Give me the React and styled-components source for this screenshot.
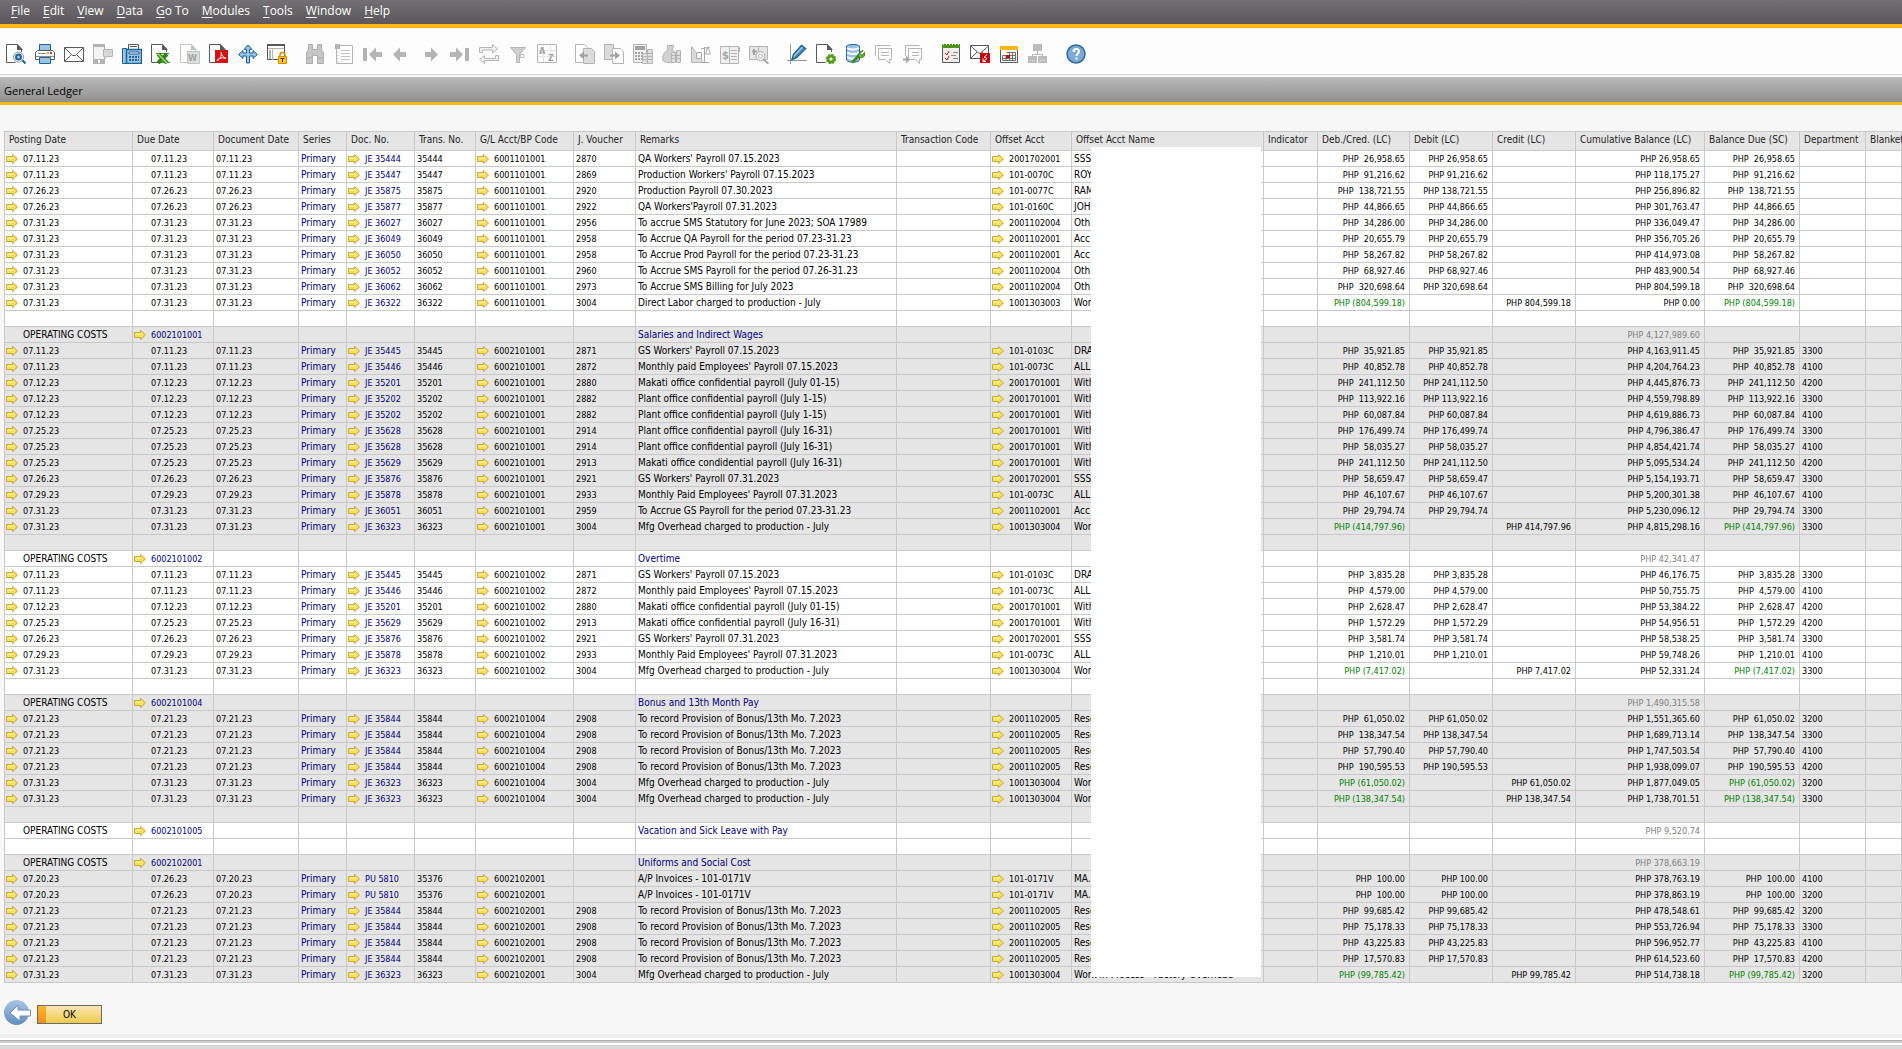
import React from "react";
import styled, { createGlobalStyle } from "styled-components";

const menus = [
  "File",
  "Edit",
  "View",
  "Data",
  "Go To",
  "Modules",
  "Tools",
  "Window",
  "Help",
];

const columns = [
  { title: "Posting Date", width: 128 },
  { title: "Due Date", width: 81 },
  { title: "Document Date", width: 85 },
  { title: "Series", width: 48 },
  { title: "Doc. No.", width: 68 },
  { title: "Trans. No.", width: 61 },
  { title: "G/L Acct/BP Code", width: 98 },
  { title: "J. Voucher", width: 62 },
  { title: "Remarks", width: 261 },
  { title: "Transaction Code", width: 94 },
  { title: "Offset Acct", width: 81 },
  { title: "Offset Acct Name", width: 192 },
  { title: "Indicator", width: 54 },
  { title: "Deb./Cred. (LC)", width: 92 },
  { title: "Debit (LC)", width: 83 },
  { title: "Credit (LC)", width: 83 },
  { title: "Cumulative Balance (LC)", width: 129 },
  { title: "Balance Due (SC)", width: 95 },
  { title: "Department", width: 66 },
  { title: "Blanket" },
];

const wip = "Work in Process - Factory Overhead";
const makati = "Makati office confidential payroll";
const plant = "Plant office confidential payroll";
const bonus = "To record Provision of Bonus/13th Mo. 7.2023";
const mfg = "Mfg Overhead charged to production - July";

// date, doc no, voucher, remarks, offset acct, offset name, amount, cumulative, department
const groups = [
  {
    code: "6001101001",
    rows: [
      ["07.11.23", "JE 35444", "2870", "QA Workers' Payroll 07.15.2023", "2001702001", "SSS", "26,958.65", "26,958.65", ""],
      ["07.11.23", "JE 35447", "2869", "Production Workers' Payroll 07.15.2023", "101-0070C", "ROY", "91,216.62", "118,175.27", ""],
      ["07.26.23", "JE 35875", "2920", "Production Payroll 07.30.2023", "101-0077C", "RAM", "138,721.55", "256,896.82", ""],
      ["07.26.23", "JE 35877", "2922", "QA Workers'Payroll 07.31.2023", "101-0160C", "JOH", "44,866.65", "301,763.47", ""],
      ["07.31.23", "JE 36027", "2956", "To accrue SMS Statutory for June 2023; SOA 17989", "2001102004", "Oth", "34,286.00", "336,049.47", ""],
      ["07.31.23", "JE 36049", "2958", "To Accrue QA Payroll for the period 07.23-31.23", "2001102001", "Acc", "20,655.79", "356,705.26", ""],
      ["07.31.23", "JE 36050", "2958", "To Accrue Prod Payroll for the period 07.23-31.23", "2001102001", "Acc", "58,267.82", "414,973.08", ""],
      ["07.31.23", "JE 36052", "2960", "To Accrue SMS Payroll for the period 07.26-31.23", "2001102004", "Oth", "68,927.46", "483,900.54", ""],
      ["07.31.23", "JE 36062", "2973", "To Accrue SMS Billing for July 2023", "2001102004", "Oth", "320,698.64", "804,599.18", ""],
      ["07.31.23", "JE 36322", "3004", "Direct Labor charged to production - July", "1001303003", "Wor", "-804,599.18", "0.00", ""],
    ],
    spacer: true,
  },
  {
    code: "6002101001",
    name: "Salaries and Indirect Wages",
    opening: "4,127,989.60",
    rows: [
      ["07.11.23", "JE 35445", "2871", "GS Workers' Payroll 07.15.2023", "101-0103C", "DRA", "35,921.85", "4,163,911.45", "3300"],
      ["07.11.23", "JE 35446", "2872", "Monthly paid Employees' Payroll 07.15.2023", "101-0073C", "ALL", "40,852.78", "4,204,764.23", "4100"],
      ["07.12.23", "JE 35201", "2880", `${makati} (July 01-15)`, "2001701001", "With", "241,112.50", "4,445,876.73", "4200"],
      ["07.12.23", "JE 35202", "2882", `${plant} (July 1-15)`, "2001701001", "With", "113,922.16", "4,559,798.89", "3300"],
      ["07.12.23", "JE 35202", "2882", `${plant} (July 1-15)`, "2001701001", "With", "60,087.84", "4,619,886.73", "4100"],
      ["07.25.23", "JE 35628", "2914", `${plant} (July 16-31)`, "2001701001", "With", "176,499.74", "4,796,386.47", "3300"],
      ["07.25.23", "JE 35628", "2914", `${plant} (July 16-31)`, "2001701001", "With", "58,035.27", "4,854,421.74", "4100"],
      ["07.25.23", "JE 35629", "2913", "Makati office condidential payroll (July 16-31)", "2001701001", "With", "241,112.50", "5,095,534.24", "4200"],
      ["07.26.23", "JE 35876", "2921", "GS Workers' Payroll 07.31.2023", "2001702001", "SSS", "58,659.47", "5,154,193.71", "3300"],
      ["07.29.23", "JE 35878", "2933", "Monthly Paid Employees' Payroll 07.31.2023", "101-0073C", "ALL", "46,107.67", "5,200,301.38", "4100"],
      ["07.31.23", "JE 36051", "2959", "To Accrue GS Payroll for the period 07.23-31.23", "2001102001", "Acc", "29,794.74", "5,230,096.12", "3300"],
      ["07.31.23", "JE 36323", "3004", mfg, "1001303004", "Wor", "-414,797.96", "4,815,298.16", "3300"],
    ],
    spacer: true,
  },
  {
    code: "6002101002",
    name: "Overtime",
    opening: "42,341.47",
    rows: [
      ["07.11.23", "JE 35445", "2871", "GS Workers' Payroll 07.15.2023", "101-0103C", "DRA", "3,835.28", "46,176.75", "3300"],
      ["07.11.23", "JE 35446", "2872", "Monthly paid Employees' Payroll 07.15.2023", "101-0073C", "ALL", "4,579.00", "50,755.75", "4100"],
      ["07.12.23", "JE 35201", "2880", `${makati} (July 01-15)`, "2001701001", "With", "2,628.47", "53,384.22", "4200"],
      ["07.25.23", "JE 35629", "2913", `${makati} (July 16-31)`, "2001701001", "With", "1,572.29", "54,956.51", "4200"],
      ["07.26.23", "JE 35876", "2921", "GS Workers' Payroll 07.31.2023", "2001702001", "SSS", "3,581.74", "58,538.25", "3300"],
      ["07.29.23", "JE 35878", "2933", "Monthly Paid Employees' Payroll 07.31.2023", "101-0073C", "ALL", "1,210.01", "59,748.26", "4100"],
      ["07.31.23", "JE 36323", "3004", mfg, "1001303004", "Wor", "-7,417.02", "52,331.24", "3300"],
    ],
    spacer: true,
  },
  {
    code: "6002101004",
    name: "Bonus and 13th Month Pay",
    opening: "1,490,315.58",
    rows: [
      ["07.21.23", "JE 35844", "2908", bonus, "2001102005", "Rese", "61,050.02", "1,551,365.60", "3200"],
      ["07.21.23", "JE 35844", "2908", bonus, "2001102005", "Rese", "138,347.54", "1,689,713.14", "3300"],
      ["07.21.23", "JE 35844", "2908", bonus, "2001102005", "Rese", "57,790.40", "1,747,503.54", "4100"],
      ["07.21.23", "JE 35844", "2908", bonus, "2001102005", "Rese", "190,595.53", "1,938,099.07", "4200"],
      ["07.31.23", "JE 36323", "3004", mfg, "1001303004", "Wor", "-61,050.02", "1,877,049.05", "3200"],
      ["07.31.23", "JE 36323", "3004", mfg, "1001303004", "Wor", "-138,347.54", "1,738,701.51", "3300"],
    ],
    spacer: true,
  },
  {
    code: "6002101005",
    name: "Vacation and Sick Leave with Pay",
    opening: "9,520.74",
    rows: [],
    spacer: true,
  },
  {
    code: "6002102001",
    name: "Uniforms and Social Cost",
    opening: "378,663.19",
    rows: [
      ["07.20.23", "PU 5810", "", "A/P Invoices - 101-0171V", "101-0171V", "MA.", "100.00", "378,763.19", "4100"],
      ["07.20.23", "PU 5810", "", "A/P Invoices - 101-0171V", "101-0171V", "MA.", "100.00", "378,863.19", "3200"],
      ["07.21.23", "JE 35844", "2908", bonus, "2001102005", "Rese", "99,685.42", "478,548.61", "3200"],
      ["07.21.23", "JE 35844", "2908", bonus, "2001102005", "Rese", "75,178.33", "553,726.94", "3300"],
      ["07.21.23", "JE 35844", "2908", bonus, "2001102005", "Rese", "43,225.83", "596,952.77", "4100"],
      ["07.21.23", "JE 35844", "2908", bonus, "2001102005", "Rese", "17,570.83", "614,523.60", "4200"],
      ["07.31.23", "JE 36323", "3004", mfg, "1001303004", wip, "-99,785.42", "514,738.18", "3200"],
    ],
  },
];

// invoices carry their own transaction number and due date
const invoice = { "PU 5810": { trans: "35376", due: "07.26.23" } };

const dark = "#58595b";
const grey = "#b4b4b4";
const blue = "#1b6392";
const sky = "#9cc3e4";

const Page = ({ color = dark }) => (
  <path d="M15.500 8V5L11.500 .5H.5v18h9" fill="#fff" stroke={color} />
);

const Fold = ({ color = dark }) => <path d="M11 0v6h6z" fill={color} />;

const icons = {
  Preview: (
    <>
      <Page />
      <Fold />
      <path d="M15.500 15.500l4 4" stroke={blue} strokeWidth="2" />
      <circle cx="12.500" cy="13" r="5" fill="#fff" stroke="#8b9196" />
      <circle cx="12.500" cy="13" r="2.500" fill={sky} stroke={blue} strokeWidth="2" />
    </>
  ),
  Print: (
    <>
      <path d="M4.500 .5h11v6h-11z" fill={sky} stroke={blue} />
      <path d="M2.500 6.500h15l2 2v7h-19v-7z" fill="#fff" stroke={dark} />
      <path d="M3 9.500h8M1 12.500h18" stroke="#8a8c8e" />
      <path d="M12 8h2v2h-2z" fill="#f0a500" />
      <path d="M15 8h2v2h-2z" fill="#d33" />
      <path d="M4.500 13.500h11v6h-11z" fill={sky} stroke={blue} />
    </>
  ),
  "Send E-Mail": (
    <path d="M.5 3.500h19v14H.5zM1 4l7.500 7.500h3L19 4M1 17l6-6M19 17l-6-6" fill="#fff" stroke={dark} />
  ),
  "Send SMS": (
    <>
      <path d="M.5 .5h11v19h-11z" fill="#f4f4f4" stroke={grey} />
      <path d="M0 0h12v3H0zM0 15h12v5H0z" fill={grey} />
      <path d="M5 16h2v3H5z" fill="#fff" />
      <path d="M10.500 5.500h9v7h-6l-2 3v-3h-1z" fill="#d7d7d7" stroke={grey} />
    </>
  ),
  "Send Fax": (
    <>
      <path d="M6.500 5.500v-5h10v5" fill="#fff" stroke={dark} />
      <path d="M8 2.500h7" stroke={dark} />
      <path d="M.5 4.500h4v15h-4z" fill={sky} stroke={blue} />
      <path d="M4.500 5.500h15v14h-15z" fill={sky} stroke={blue} strokeWidth="1.500" />
      <path d="M7 8h10v2H7z" fill="#fff" stroke={blue} />
      <path d="M7 13h10M7 16h10" stroke={blue} strokeWidth="2" strokeDasharray="2 1" />
    </>
  ),
  "Export to Excel": (
    <>
      <Page />
      <Fold />
      <path d="M5 9.500h13M7 18.500h12" stroke="#3d8f22" />
      <path d="M7 10l9 9M16 10l-9 9" stroke="#2f8418" strokeWidth="4" />
      <path d="M7 10l9 9" stroke="#a7d67a" strokeWidth="1.500" />
    </>
  ),
  "Export to Word": (
    <>
      <Page color="#c4c4c4" />
      <Fold color="#c4c4c4" />
      <path d="M7.500 7.500h12v12h-12z" fill="#dedede" stroke="#bcc8bc" />
      <text x="8" y="17" fontSize="9" fontWeight="700" fill="#a2a2a2">
        W
      </text>
    </>
  ),
  "Export to PDF": (
    <>
      <Page />
      <Fold />
      <path d="M6 6h13v13H6z" fill="#d8100f" />
      <path d="M12 8.500c1 3 2 5 5 6-3-1-7-1-9 2 3-1 5-5 4-8z" fill="none" stroke="#fff" />
    </>
  ),
  "Launch Application": (
    <path
      d="M10 1l4 4.500h-2.500v3.500H15V6.500l4.500 4-4.500 4V12h-3.500v7h-3v-7H5v2.500l-4.500-4 4.500-4V9h3.500V5.500H6z"
      fill={sky}
      stroke={blue}
    />
  ),
  "Lock Screen": (
    <>
      <path d="M.5 .5h17v15H.5z" fill="#fff" stroke={dark} />
      <path d="M0 0h18v2H0z" fill={dark} />
      <path d="M1 4.500h16M5.500 4v12" stroke={grey} />
      <path d="M3 6v9" stroke={grey} strokeWidth="2" />
      <path d="M13 13v-2a2.500 2.500 0 0 1 5 0v2" fill="none" stroke="#e08a00" strokeWidth="1.500" />
      <path d="M11.500 12.500h8v7h-8z" fill="#ffc423" stroke="#e08a00" />
      <path d="M13.500 14.500h4M15.500 14v4" stroke="#4b3a10" />
    </>
  ),
  Find: (
    <path
      d="M3.500.5h4v5h5v-5h4v5l2 3v11h-6v-8h-5v8h-6v-11l2-3zM1 14h6M13 14h6"
      fill="#c6c6c6"
      stroke="#adadad"
    />
  ),
  "Form Settings": (
    <>
      <path d="M2.500 1.500h16v18h-16z" fill="#fff" stroke={grey} />
      <path d="M1 0h5v5H1z" fill={grey} />
      <path d="M7 6.500h9M7 9.500h9M7 12.500h9M7 15.500h9" stroke="#c4c4c4" />
      <path d="M4 8v10" stroke={grey} strokeDasharray="1 2" />
    </>
  ),
  "First Record": <path d="M0 4h4v13H0zM6 10.500l7-7V8h6v5h-6v4.500z" fill={grey} />,
  "Previous Record": <path d="M1 10.500l7-7V8h6v5H8v4.500z" fill={grey} />,
  "Next Record": <path d="M17 10.500l-7-7V8H4v5h6v4.500z" fill={grey} />,
  "Last Record": <path d="M15 4h4v13h-4zM13 10.500l-7-7V8H0v5h6v4.500z" fill={grey} />,
  Refresh: (
    <path
      d="M.5 8.500v-5h13v-3l5 4.500-5 4v-3h-10v2.500zM19.500 11.500v5h-14v3L.5 15.500l5-4v3h11v-3z"
      fill="#f2f2f2"
      stroke={grey}
    />
  ),
  Filter: (
    <>
      <path d="M2.500 3.500h15l-6 7v8h-3v-8z" fill="#cfcfcf" stroke={grey} />
      <path d="M12.500 10.500h3.500v3h-3.500z" fill="none" stroke="#b5c4b5" />
    </>
  ),
  Sort: (
    <>
      <path d="M.5 .5h19v18H.5z" fill="#fff" stroke={grey} />
      <path d="M1 6.500h18M1 12.500h18M6.500 1v17M13.500 1v17" stroke="#e4e4e4" />
      <text x="2" y="10" fontSize="9" fontWeight="700" fill="#a6a6a6">
        A
      </text>
      <text x="11" y="17" fontSize="9" fontWeight="700" fill="#a6a6a6">
        Z
      </text>
    </>
  ),
  "Base Document": (
    <>
      <path d="M.5 .5h9l3 3v15H.5z" fill="#fff" stroke={grey} />
      <path d="M8.500 4.500h8l3 3v12h-11z" fill="#dcdcdc" stroke={grey} />
      <path d="M4 11.500l5-4v3h4v2H9v3z" fill="#a2a2a2" />
    </>
  ),
  "Target Document": (
    <>
      <path d="M.5 .5h9v15H.5z" fill="#dcdcdc" stroke={grey} />
      <path d="M8.500 4.500h8l3 3v12h-11z" fill="#fff" stroke={grey} />
      <path d="M16 11.500l-5-4v3H6v2h5v3z" fill="#a2a2a2" />
    </>
  ),
  "Gross Profit": (
    <>
      <path d="M.5 .5h13v18H.5z" fill="#f2f2f2" stroke={grey} />
      <path d="M2 2h10v4H2z" fill="#a4a4a4" />
      <path d="M2 9h8M2 12h7M2 15h7" stroke="#a4a4a4" strokeWidth="2" strokeDasharray="2 1" />
      <path d="M9.500 9.500h5v10h-5zM14.500 5.500h5v14h-5z" fill="#dedede" stroke={grey} />
      <path d="M10 12.500h9M10 15.500h9M15 9.500h4" stroke={grey} />
    </>
  ),
  "Payment Means": (
    <>
      <path d="M5 1.500h7l-2 4c4 3 6 6 5 11-1 3-12 3-14 0-1-5 1-8 5-11z" fill="#d2d2d2" stroke={grey} />
      <path d="M9.500 8.500h4v10h-4zM14.500 6.500h4v12h-4z" fill="#dedede" stroke={grey} />
      <path d="M10 11.500h9M10 14.500h9" stroke={grey} />
    </>
  ),
  "Volume and Weight": (
    <>
      <path d="M.5 2.500v16h12z" fill="#dadada" stroke={grey} />
      <path d="M5.500 8.500h5v6h-5z" fill="#f4f4f4" stroke="#a8a8a8" />
      <path d="M9 18.500h9M13.500 3v15M10 5l9-2M16.500 4l-2 6h5l-2-6" fill="none" stroke="#a8a8a8" />
    </>
  ),
  "Transaction Journal": (
    <>
      <path d="M.5 2.500h9v17h-9zM9.500 2.500h9v17h-9z" fill="#f0f0f0" stroke={grey} />
      <path d="M11 6.500h6M11 9.500h6M11 12.500h6M11 15.500h6M19.500 3v5" stroke={grey} />
      <text x="2" y="15" fontSize="11" fontWeight="700" fill="#a6a6a6">
        $
      </text>
    </>
  ),
  "Journal Voucher": (
    <>
      <path d="M.5 2.500h9v13h-9zM9.500 2.500h9v13h-9z" fill="#e6e6e6" stroke={grey} />
      <path d="M3 7.500h5M5 5v6M14 15.500l5.500 4" stroke="#a6a6a6" strokeWidth="2" />
      <circle cx="11.500" cy="12" r="4.500" fill="#f6f6f6" stroke="#a6a6a6" />
      <circle cx="11.500" cy="12" r="2" fill="#fff" stroke={grey} />
    </>
  ),
  "Layout Designer": (
    <>
      <path d="M3.500 0v20M0 16.500h20" stroke="#8c9a9a" />
      <path d="M6.500 10.500L14.500 1.500l4 3-9 9-4.500 2z" fill={sky} stroke={blue} strokeWidth="1.500" />
      <path d="M8 13l9-9.500" stroke={blue} />
    </>
  ),
  "Form Layout": (
    <>
      <Page />
      <Fold />
      <circle cx="15" cy="15" r="3" fill="#fff" stroke="#5a9e1e" strokeWidth="3" />
      <circle cx="15" cy="15" r="4.500" fill="none" stroke="#5a9e1e" strokeWidth="1.500" strokeDasharray="2 1.500" />
    </>
  ),
  "Query Manager": (
    <>
      <path d="M1.500 2v14c2 3 11 3 13 0V2c-2-2-11-2-13 0z" fill={sky} stroke={blue} />
      <path d="M2 4c3 2 9 2 12 0M2 8.500c3 2 9 2 12 0M2 13c3 2 7 2 9 1" fill="none" stroke="#fff" strokeWidth="2" />
      <path d="M7 18.500l8-8" stroke="#3f8c16" strokeWidth="3" />
      <path d="M18 6.500l-3 3 2 2 2.500-3c1 4-2 6-5 5-2-1-2-5 3.500-7z" fill="#6cb52d" stroke="#2f7c10" />
    </>
  ),
  Messages: (
    <>
      <path d="M1.500 12V1.500h15" fill="none" stroke={grey} />
      <path d="M4.500 4.500h13v11h-2v4l-4-4h-7z" fill="#fff" stroke={grey} />
      <path d="M7 8.500h8M7 11.500h8" stroke={grey} />
    </>
  ),
  "Forward Message": (
    <>
      <path d="M2.500 12V1.500h14" fill="none" stroke={grey} />
      <path d="M5.500 4.500h13v11h-2v4l-4-4h-7z" fill="#fff" stroke={grey} />
      <path d="M9 8.500h7M9 11.500h7" stroke={grey} />
      <path d="M0 14.500h3v-3l4 4-4 4v-3H0z" fill="#a6a6a6" />
    </>
  ),
  "My Activities": (
    <>
      <path d="M1.500 1.500h17v17h-17z" fill="#eee" stroke={dark} />
      <path d="M1 0h18v4H1z" fill="#4c9417" />
      <path d="M2 .5h16" stroke="#fff" strokeDasharray="1 2" />
      <path d="M4 9l2 2 2-4M4 14l2 2 2-4" fill="none" stroke="#d8100f" />
      <path d="M12 8.500h5M10 11.500h5M12 14.500h5" stroke="#8a8c8e" />
    </>
  ),
  "Messages and Alerts": (
    <>
      <path d="M.5 1.500h18v13H.5zM1 2l7.500 7h2l8-7M1 14l6-6M18 14l-6-6" fill="#fff" stroke={dark} />
      <path d="M10 9h10v10H10z" fill="#d0020f" />
      <path d="M17 10.500l-3 2.500 3 1.500-4 3m0-3v3h3" fill="none" stroke="#fff" />
    </>
  ),
  Calendar: (
    <>
      <path d="M1.500 2.500h17v16h-17z" fill="#fff" stroke={dark} />
      <path d="M1 2h18v4H1z" fill="#fbb713" />
      <path d="M3.500 11.500h13v5h-13zM7.500 8.500h9v8M7 11v6M10.500 8v9M13.500 8v9M3 14.500h14" fill="none" stroke="#6d6e70" />
      <path d="M7 11h4v3H7z" fill="#d0020f" />
    </>
  ),
  "Org Chart": (
    <>
      <path d="M5 0h9v7H5zM0 12h9v7H0zM10 12h9v7h-9z" fill="#bcbcbc" />
      <path d="M9.500 7v3M4.500 13v-2.500h10V13" fill="none" stroke={grey} />
      <path d="M2 16.500h5M12 16.500h5" stroke="#e4e4e4" strokeDasharray="1 1" />
    </>
  ),
  Help: (
    <>
      <circle cx="10" cy="10" r="9" fill="#7ea9d1" stroke="#2c6d99" strokeWidth="1.500" />
      <path d="M7.500 8c0-4 5.500-4 5.500-.5 0 2-2.500 2-2.500 4.500M10.500 13.500v2" fill="none" stroke="#fff" strokeWidth="2" />
    </>
  ),
};

const toolGroups = [
  ["Preview", "Print", "Send E-Mail", "Send SMS", "Send Fax", "Export to Excel", "Export to Word", "Export to PDF", "Launch Application", "Lock Screen"],
  ["Find", "Form Settings", "First Record", "Previous Record", "Next Record", "Last Record", "Refresh", "Filter", "Sort"],
  ["Base Document", "Target Document", "Gross Profit", "Payment Means", "Volume and Weight", "Transaction Journal", "Journal Voucher"],
  ["Layout Designer", "Form Layout", "Query Manager", "Messages", "Forward Message"],
  ["My Activities", "Messages and Alerts", "Calendar", "Org Chart"],
  ["Help"],
];

const LinkArrow = ({ label }) => (
  <ArrowButton type="button" aria-label={label}>
    <svg width="12" height="10" viewBox="0 0 12 10">
      <path d="M.5 2.500h6v-2l5 4.500-5 4.500v-2h-6z" fill="#fbe052" stroke="#c9a63a" />
      <path d="M1.500 4h6" stroke="#fff7c4" />
    </svg>
  </ArrowButton>
);

const Linked = ({ children, label = "Open" }) => (
  <LinkedText>
    <LinkArrow label={label} />
    {children}
  </LinkedText>
);

const EmptyCells = ({ count }) =>
  Array.from({ length: count }, (_, i) => <Cell key={i} />);

const AccountRow = ({ group }) => (
  <tr>
    <Cell $indent $text>
      OPERATING COSTS
    </Cell>
    <Cell $link $tone="link">
      <Linked>{group.code}</Linked>
    </Cell>
    <EmptyCells count={6} />
    <Cell $text $tone="link">
      {group.name}
    </Cell>
    <EmptyCells count={7} />
    <Cell $right $tone="muted">
      PHP {group.opening}
    </Cell>
    <EmptyCells count={3} />
  </tr>
);

const EntryRow = ({ row, code }) => {
  const [date, doc, voucher, remarks, offset, name, amount, total, dept] = row;
  const extra = invoice[doc];
  const credit = amount.startsWith("-");
  const value = amount.replace("-", "");
  const signed = credit ? `PHP (${value})` : `PHP  ${value}`;
  const tone = credit ? "credit" : undefined;

  return (
    <tr>
      <Cell $link>
        <Linked>{date}</Linked>
      </Cell>
      <Cell $indent>{extra ? extra.due : date}</Cell>
      <Cell>{date}</Cell>
      <Cell $text $tone="link">
        Primary
      </Cell>
      <Cell $link $tone="link">
        <Linked>{doc}</Linked>
      </Cell>
      <Cell>{extra ? extra.trans : doc.slice(3)}</Cell>
      <Cell $link>
        <Linked>{code}</Linked>
      </Cell>
      <Cell>{voucher}</Cell>
      <Cell $text>{remarks}</Cell>
      <Cell />
      <Cell $link>
        <Linked>{offset}</Linked>
      </Cell>
      <Cell $text>{name}</Cell>
      <Cell />
      <Cell $right $tone={tone}>
        {signed}
      </Cell>
      <Cell $right>{!credit && `PHP ${value}`}</Cell>
      <Cell $right>{credit && `PHP ${value}`}</Cell>
      <Cell $right>PHP {total}</Cell>
      <Cell $right $tone={tone}>
        {signed}
      </Cell>
      <Cell>{dept}</Cell>
      <Cell />
    </tr>
  );
};

const App = () => {
  return (
    <Shell>
      <GlobalStyle />
      <MenuBar>
        {menus.map((menu) => (
          <MenuButton key={menu} type="button">
            <u>{menu[0]}</u>
            {menu.slice(1)}
          </MenuButton>
        ))}
      </MenuBar>
      <Toolbar>
        {toolGroups.map((names) => (
          <ToolGroup key={names[0]}>
            {names.map((name) => (
              <ToolButton key={name} type="button" aria-label={name}>
                <svg width="20" height="20" viewBox="0 0 20 20" fill="none">
                  {icons[name]}
                </svg>
              </ToolButton>
            ))}
          </ToolGroup>
        ))}
      </Toolbar>
      <TitleBar>General Ledger</TitleBar>
      <Content>
        <Grid>
          <Ledger>
            <colgroup>
              {columns.map(({ title, width }) => (
                <col key={title} width={width} />
              ))}
            </colgroup>
            <thead>
              <tr>
                {columns.map(({ title }) => (
                  <HeadCell key={title} scope="col">
                    {title}
                  </HeadCell>
                ))}
              </tr>
            </thead>
            {groups.map((group, index) => (
              <Section key={group.code} $shaded={index % 2 === 1}>
                {group.name && <AccountRow group={group} />}
                {group.rows.map((row, i) => (
                  <EntryRow key={i} row={row} code={group.code} />
                ))}
                {group.spacer && (
                  <tr>
                    <EmptyCells count={columns.length} />
                  </tr>
                )}
              </Section>
            ))}
          </Ledger>
          <NameCover />
        </Grid>
        <Actions>
          <BackButton type="button" aria-label="Back">
            <svg width="28" height="26" viewBox="0 0 28 26">
              <defs>
                <linearGradient id="ball" x1="0" y1="0" x2="0" y2="1">
                  <stop offset="0" stopColor="#a9c4e2" />
                  <stop offset="0.500" stopColor="#86a9d4" />
                  <stop offset="1" stopColor="#5f8dbb" />
                </linearGradient>
              </defs>
              <circle cx="12.500" cy="12.500" r="12.500" fill="url(#ball)" />
              <path d="M6 13l8-8v5h12.500v6H16v5z" fill="#fff" stroke="#6f8fae" />
            </svg>
          </BackButton>
          <OkButton type="button">OK</OkButton>
        </Actions>
      </Content>
      <StatusBar />
    </Shell>
  );
};

const GlobalStyle = createGlobalStyle`
  body {
    margin: 0;
    background: #f7f7f7;
  }

  button {
    margin: 0;
    padding: 0;
    border: 0;
    background: none;
    color: inherit;
    font: inherit;
  }

  svg {
    display: block;
  }
`;

const Shell = styled.div`
  display: flex;
  flex-direction: column;
  min-height: 100vh;
  overflow: hidden;
  font-family: "DejaVu Sans Condensed", "DejaVu Sans", sans-serif;
  font-size: 10px;
  color: #000;
`;

const MenuBar = styled.nav`
  display: flex;
  gap: 13px;
  height: 24px;
  padding-left: 11px;
  border-bottom: 4px solid #fdb813;
  background: linear-gradient(#727072, #5b575b);
  color: #fff;
  font-family: "Open Sans", "Noto Sans", sans-serif;
  font-size: 12px;
  line-height: 22px;
`;

const MenuButton = styled.button`
  display: block;
  height: 22px;
  white-space: nowrap;

  u {
    text-underline-offset: 2px;
  }
`;

const Toolbar = styled.div`
  display: flex;
  align-items: center;
  gap: 18px;
  height: 40px;
  padding: 6px 6px 0;
  border-bottom: 1px solid #d2d2d2;
  background: #fdfdfd;
`;

const ToolGroup = styled.div`
  display: flex;
  gap: 9px;
`;

const ToolButton = styled.button`
  width: 20px;
  height: 20px;
`;

const TitleBar = styled.header`
  height: 25px;
  margin-top: 2px;
  padding-left: 4px;
  border-bottom: 3px solid #fdb813;
  background: linear-gradient(#bababa, #8f8f8f);
  font-family: "Open Sans", "Noto Sans", sans-serif;
  font-size: 11px;
  line-height: 27px;
`;

const Content = styled.main`
  flex: 1;
  padding: 26px 0 8px 4px;
`;

const Grid = styled.div`
  position: relative;
  overflow: hidden;
`;

const Ledger = styled.table`
  table-layout: fixed;
  width: 100%;
  min-width: 1898px;
  border-top: 1px solid #c9c9c9;
  border-left: 1px solid #c9c9c9;
  border-spacing: 0;
`;

const HeadCell = styled.th`
  box-sizing: border-box;
  height: 19px;
  padding: 0 0 2px 4px;
  border-right: 1px solid #c9c9c9;
  border-bottom: 1px solid #c9c9c9;
  background: #e5e5e5;
  color: #222;
  font-weight: 400;
  line-height: 16px;
  text-align: left;
  white-space: nowrap;
`;

const Section = styled.tbody`
  background: ${({ $shaded }) => ($shaded ? "#e5e5e5" : "#fff")};
`;

const tones = { link: "#000080", credit: "#008000", muted: "#808080" };

const leftPad = ({ $indent, $link }) => ($indent ? 18 : $link ? 1 : 2);

const Cell = styled.td`
  box-sizing: border-box;
  height: 16px;
  padding: 1px ${({ $right }) => ($right ? 4 : 0)}px 0 ${leftPad}px;
  overflow: hidden;
  border-right: 1px solid #c9c9c9;
  border-bottom: 1px solid #c9c9c9;
  color: ${({ $tone }) => tones[$tone] || "#000"};
  font-size: ${({ $text }) => ($text ? 10 : 9)}px;
  line-height: 14px;
  text-align: ${({ $right }) => ($right ? "right" : "left")};
  white-space: pre;
`;

const LinkedText = styled.span`
  display: flex;
  align-items: center;
  gap: 5px;
  height: 14px;
`;

const ArrowButton = styled.button`
  width: 12px;
  height: 10px;
`;

const NameCover = styled.div`
  position: absolute;
  top: 16px;
  bottom: 6px;
  left: 1087px;
  width: 170px;
  background: #fff;
`;

const Actions = styled.div`
  display: flex;
  align-items: center;
  gap: 5px;
  margin-top: 17px;
`;

const BackButton = styled.button`
  width: 28px;
  height: 26px;
`;

const OkButton = styled.button`
  width: 65px;
  height: 19px;
  margin-top: 3px;
  border: 1px solid #6a6a6a;
  background:
    linear-gradient(#fbb829, #ef8f1c) left / 8px 100% no-repeat,
    linear-gradient(#f7e6b4, #f2cb4c);
`;

const StatusBar = styled.footer`
  height: 15px;
  background: linear-gradient(
    #f0f0f0 4px,
    #fff 4px 6px,
    #aeaeae 6px 7px,
    #cfcfcf 7px 9px,
    #fff 9px 11px,
    #d9d9d9 11px
  );
`;

export default App;
